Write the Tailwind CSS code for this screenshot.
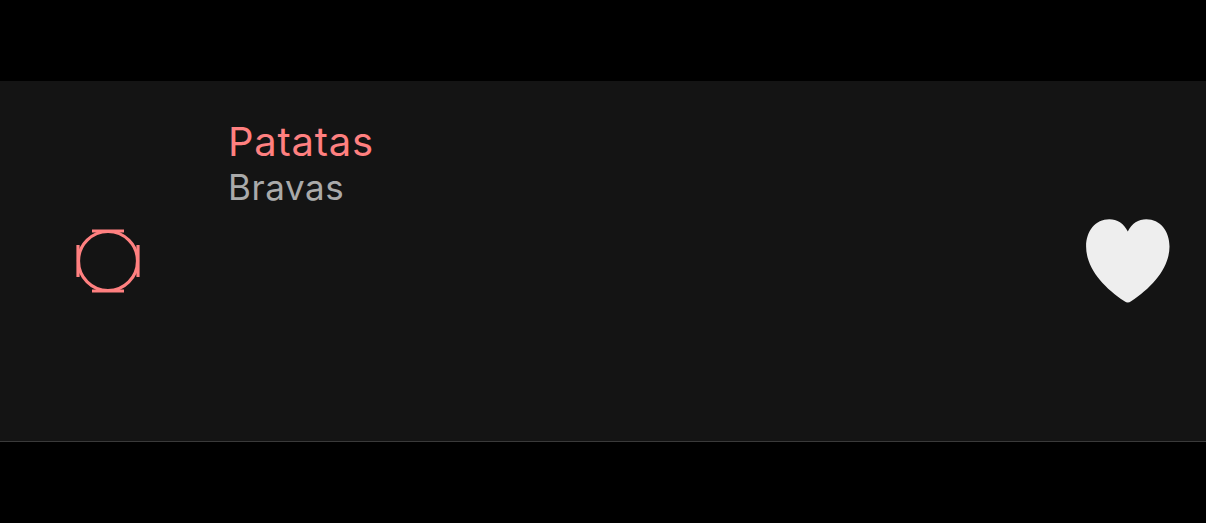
<!DOCTYPE html>
<html lang="en"><head><meta charset="utf-8"><title>Patatas</title>
<script src="https://cdn.jsdelivr.net/npm/@tailwindcss/browser@4"></script></head>
<body class="bg-black">
<main class="h-[523px] overflow-hidden bg-black pt-[81px] font-['Inter',sans-serif]">
<article class="flex h-[361px] border-b border-[#3a3a3a] bg-[#141414]">
<div class="flex w-[216px] items-center justify-center">
<svg class="h-16 w-16" viewBox="0 0 64 64" fill="none" stroke="#ff8080" stroke-width="3.2"><circle cx="32" cy="32" r="29.5"/><path d="M16 2H48M16 62H48M2 16V48M62 16V48"/></svg>
</div>
<div class="flex-1 pt-[38px] pl-3">
<h1 class="h-[46px] text-[40px] leading-[46px] tracking-[0.75px] text-[#ff8080] antialiased">Patatas</h1>
<p class="h-[46px] text-[35px] leading-[45px] tracking-[0.6px] text-[#aaaaaa] antialiased">Bravas</p>
</div>
<div class="flex items-center pr-9">
<svg class="h-[84px] w-[84px]" viewBox="0 0 84 84" fill="#eee"><path d="M41.8 12.5C38 4.5 31 .3 23.3 .3C9.5 .3 .1 12 .1 27.5C.1 49 17.5 68.5 38.5 82.3Q41.8 84.8 45.1 82.3C66 68.5 83.5 49 83.5 27.5C83.5 12 74.1 .3 60.3 .3C52.6 .3 45.6 4.5 41.8 12.5Z"/></svg>
</div>
</article>
</main>
</body></html>
